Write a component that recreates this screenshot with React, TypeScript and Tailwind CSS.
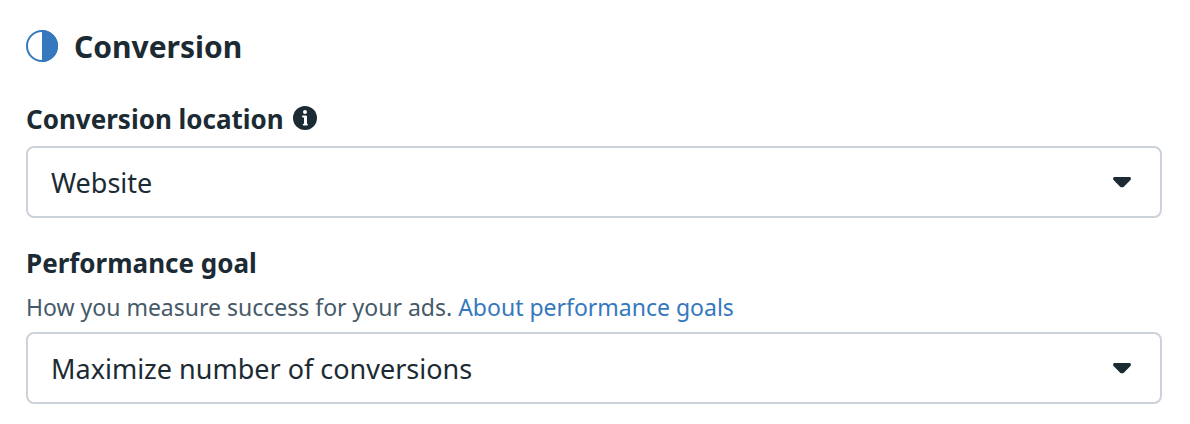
import type { ReactNode } from "react";

function HalfCircleIcon() {
  return (
    <svg className="size-8 shrink-0" viewBox="0 0 32 32" aria-hidden="true">
      <circle cx="16" cy="16" r="15" fill="#fff" stroke="#3578be" strokeWidth="2" />
      <path d="M16 0a16 16 0 0 1 0 32z" fill="#3578be" />
    </svg>
  );
}

function InfoIcon() {
  return (
    <svg className="size-6" viewBox="0 0 24 24" aria-hidden="true">
      <circle cx="12" cy="12" r="12" fill="#1c2b33" />
      <circle cx="12" cy="6" r="2" fill="#fff" />
      <path
        d="M10 9.5h3a1 1 0 0 1 1 1v7.2a.9.9 0 0 1 0 1.8h-3.4a.9.9 0 0 1 0-1.8h.4v-6.2h-1a1 1 0 0 1 0-2z"
        fill="#fff"
      />
    </svg>
  );
}

function SelectField({ id, children }: { id: string; children: ReactNode }) {
  return (
    <div className="relative">
      <select
        id={id}
        className="h-[72px] w-full appearance-none rounded-lg border-2 border-[#cbd2d9] bg-white pl-[23px] pr-16 pt-[2px] text-[27px] text-[#1c2b33]"
      >
        {children}
      </select>
      <svg
        className="pointer-events-none absolute right-[30px] top-[30px] h-3 w-5"
        viewBox="0 0 20 12"
        aria-hidden="true"
      >
        <path
          d="M2.4 2.2h15.2v1L11 10H9L2.4 3.2z"
          fill="#1c2b33"
          stroke="#1c2b33"
          strokeWidth="2.4"
          strokeLinejoin="round"
        />
      </svg>
    </div>
  );
}

export default function App() {
  return (
    <section className="bg-white pb-5 pl-[26px] pr-7 pt-7 font-['Noto_Sans',sans-serif] text-[#1c2b33]">
      <div className="flex h-9 items-center gap-4">
        <HalfCircleIcon />
        <h2 className="text-[30px] font-bold">Conversion</h2>
      </div>

      <div className="mt-9 flex h-9 items-center gap-[9px]">
        <label htmlFor="location" className="pt-[2px] text-[26px] font-bold">
          Conversion location
        </label>
        <button type="button" aria-label="About conversion location">
          <InfoIcon />
        </button>
      </div>
      <div className="mt-[10px]">
        <SelectField id="location">
          <option>Website</option>
        </SelectField>
      </div>

      <label htmlFor="goal" className="mt-[27px] block text-[26px] font-bold leading-9">
        Performance goal
      </label>
      <p className="mb-[7px] mt-2 text-[23px] leading-9 text-[#465a69]">
        How you measure success for your ads.{" "}
        <a href="#goals" className="text-[#3578be]">
          About performance goals
        </a>
      </p>
      <SelectField id="goal">
        <option>Maximize number of conversions</option>
      </SelectField>
    </section>
  );
}
